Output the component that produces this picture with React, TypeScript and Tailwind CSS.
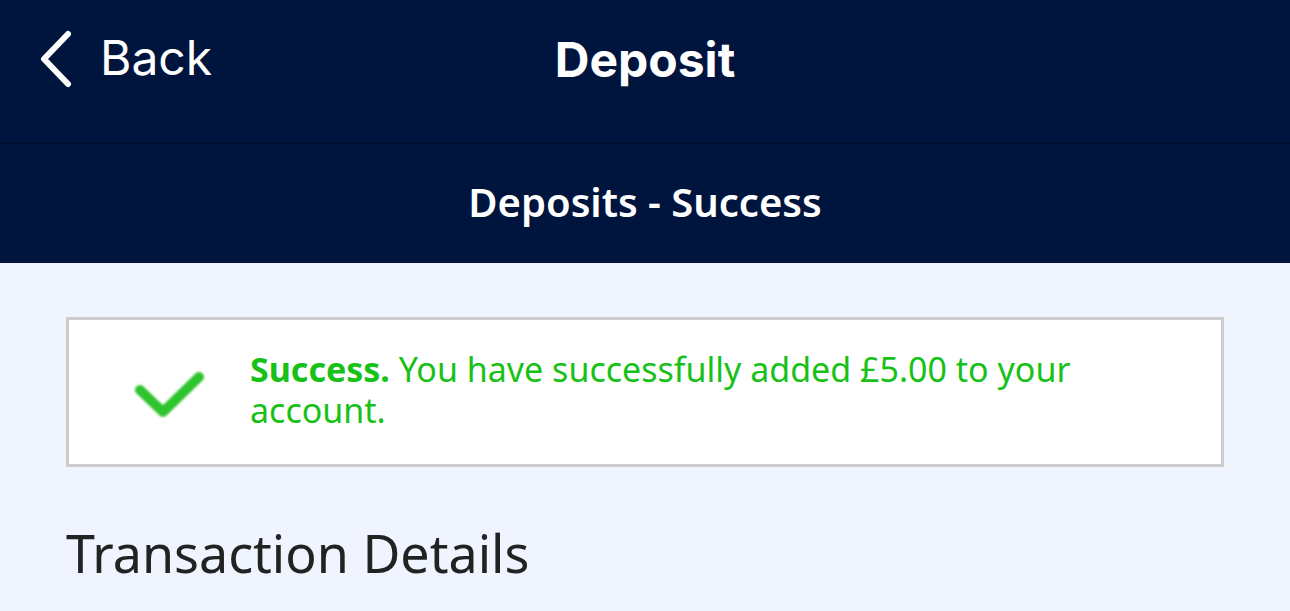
import React from "react";

export default function App() {
  return (
    <div className="w-[1290px] h-[611px] overflow-hidden bg-[#eff4fe]">
      <div className="h-[143px] bg-[#00153d] flex items-start relative">
        <div className="flex items-start pl-[40px] gap-[26px] text-white pt-[30px]">
          <svg width="34" height="60" viewBox="0 0 34 60">
            <polyline points="28,4 4,29 28,54" fill="none" stroke="white" strokeWidth="6" strokeLinecap="round" strokeLinejoin="round" />
          </svg>
          <span className="font-['Inter',sans-serif] text-[48px] leading-none pt-[4px]">Back</span>
        </div>
        <div className="absolute left-0 right-0 top-0 h-[143px] flex items-center justify-center pointer-events-none">
          <span className="font-['Inter',sans-serif] font-bold text-[48px] text-white leading-none pb-[24px]">Deposit</span>
        </div>
      </div>
      <div className="h-px bg-[#000d29]" />
      <div className="h-[119px] bg-[#00153d] flex items-center justify-center">
        <span className="font-['Noto_Sans',sans-serif] font-semibold text-[40px] text-white leading-none pb-[4px]">Deposits - Success</span>
      </div>
      <div className="px-[66px] pt-[54px]">
        <div className="border-[3px] border-[#cccccc] bg-white h-[150px] flex items-center">
          <div className="w-[181px] flex justify-center pl-[26px] pt-[14px]">
            <svg width="84" height="62" viewBox="0 0 84 62" className="blur-[1px]">
              <polyline points="9,22 32,44 68,9" fill="none" stroke="#2ec42e" strokeWidth="10" strokeLinecap="round" strokeLinejoin="round" />
            </svg>
          </div>
          <p className="font-['Noto_Sans',sans-serif] text-[34px] leading-[41px] text-[#17c117] w-[900px] pb-[4px]">
            <span className="font-bold">Success.</span> You have successfully added £5.00 to your account.
          </p>
        </div>
        <div className="pt-[60px] font-['Noto_Sans',sans-serif] text-[52px] leading-none text-[#222222]">Transaction Details</div>
      </div>
    </div>
  );
}
